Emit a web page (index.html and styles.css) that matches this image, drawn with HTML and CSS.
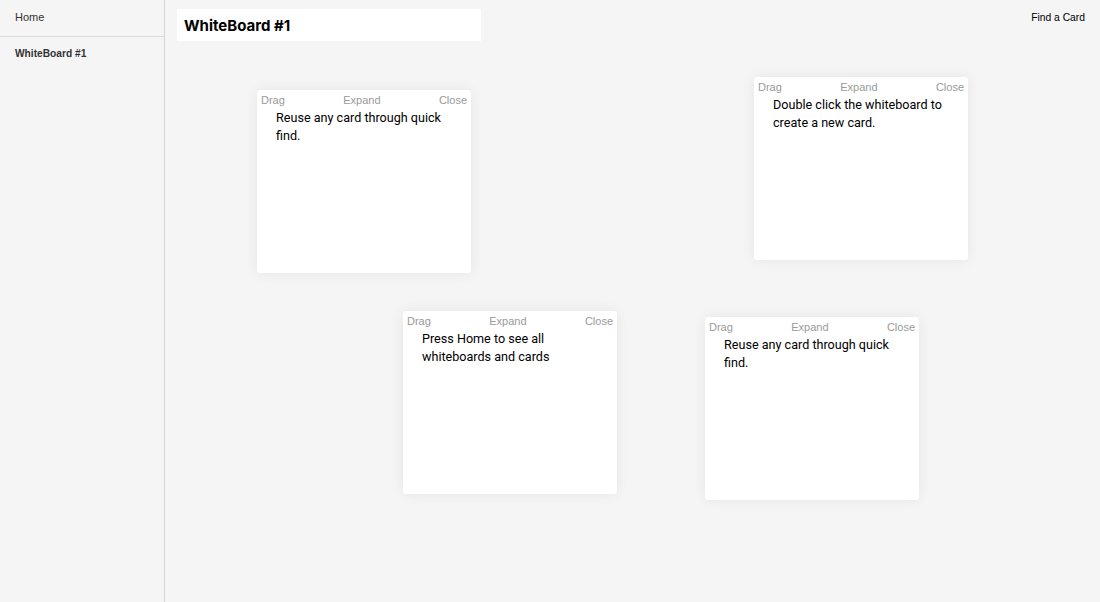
FILE: index.html
```html
<!DOCTYPE html>
<html lang="en">
<head>
    <meta charset="UTF-8">
    <meta name="viewport" content="width=device-width, initial-scale=1.0">
    <title>WhiteBoard #1</title>
    <link rel="stylesheet" href="styles.css">
</head>
<body>

<div class="app">
    <!-- Sidebar -->
    <div class="sidebar">
        <div class="nav-home">Home</div>
        <div class="nav-board">WhiteBoard #1</div>
    </div>

    <!-- Whiteboard -->
    <div class="board">
        <div class="topbar">
            <input class="board-title" type="text" value="WhiteBoard #1">
            <span class="find">Find a Card</span>
        </div>

        <div class="card" style="left: 92px; top: 90px;">
            <div class="card-head"><span>Drag</span><span>Expand</span><span>Close</span></div>
            <div class="card-text">Reuse any card through quick find.</div>
        </div>
        <div class="card" style="left: 589px; top: 77px;">
            <div class="card-head"><span>Drag</span><span>Expand</span><span>Close</span></div>
            <div class="card-text">Double click the whiteboard to create a new card.</div>
        </div>
        <div class="card" style="left: 238px; top: 311px;">
            <div class="card-head"><span>Drag</span><span>Expand</span><span>Close</span></div>
            <div class="card-text">Press Home to see all whiteboards and cards</div>
        </div>
        <div class="card" style="left: 540px; top: 317px;">
            <div class="card-head"><span>Drag</span><span>Expand</span><span>Close</span></div>
            <div class="card-text">Reuse any card through quick find.</div>
        </div>
    </div>
</div>

</body>
</html>
```

FILE: styles.css
```css
body {
    margin: 0;
    background-color: #f5f5f5;
    font-family: "Liberation Sans", Arial, sans-serif;
    color: #000;
}
.app {
    display: flex;
    height: 602px;
}

/* Sidebar */
.sidebar {
    width: 164px;
    border-right: 1px solid #d6d6d6;
    font-size: 11px;
    color: #333;
}
.nav-home {
    height: 36px;
    line-height: 34px;
    padding-left: 15px;
    border-bottom: 1px solid #dcdcdc;
}
.nav-board {
    padding: 11px 15px;
    font-size: 10.2px;
    font-weight: bold;
}

/* Board */
.board {
    flex: 1;
    position: relative;
    overflow: hidden;
}
.topbar {
    display: flex;
    justify-content: space-between;
    align-items: flex-start;
    padding: 9px 15px 0 12px;
}
.board-title {
    width: 304px;
    height: 32px;
    box-sizing: border-box;
    border: none;
    outline: none;
    background: #fff;
    padding: 0 7px;
    font-family: Inter, "Liberation Sans", sans-serif;
    font-size: 15px;
    font-weight: bold;
    color: #000;
}
.find {
    font-size: 10.3px;
    margin-top: 3px;
}

/* Cards */
.card {
    position: absolute;
    width: 214px;
    height: 183px;
    background: #fff;
    border-radius: 3px;
    box-shadow: 0 0 14px rgba(0, 0, 0, 0.07);
}
.card-head {
    display: flex;
    justify-content: space-between;
    padding: 4px 4px 0 4px;
    font-size: 11px;
    line-height: 13px;
    color: #9a9a9a;
}
.card-text {
    padding: 2px 19px 0;
    font-family: Roboto, "Liberation Sans", sans-serif;
    font-size: 12.6px;
    line-height: 18px;
}
```
